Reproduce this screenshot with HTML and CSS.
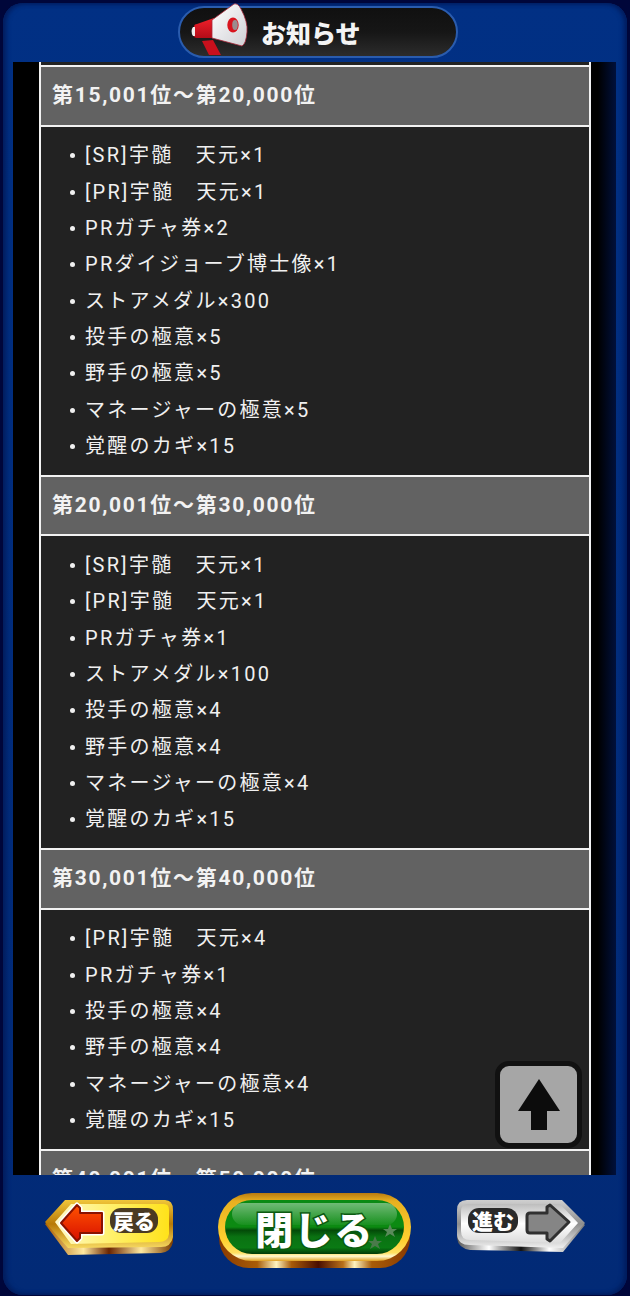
FILE: index.html
```html
<!DOCTYPE html>
<html lang="ja">
<head>
    <meta charset="UTF-8">
    <meta name="viewport" content="width=device-width, initial-scale=1.0">
    <title>お知らせ</title>
    <link rel="stylesheet" href="styles.css">
</head>
<body>
    <div class="frame">
        <!-- Title -->
        <header class="top-bar">
            <div class="title-pill">
                <svg class="megaphone" viewBox="0 0 60 60" width="60" height="60">
                    <defs>
                        <linearGradient id="bellFace" x1="0" y1="0" x2="1" y2="1">
                            <stop offset="0" stop-color="#ffffff"/>
                            <stop offset="1" stop-color="#cfcfd4"/>
                        </linearGradient>
                        <linearGradient id="hornRed" x1="0" y1="0" x2="0" y2="1">
                            <stop offset="0" stop-color="#f0202a"/>
                            <stop offset="1" stop-color="#b40c18"/>
                        </linearGradient>
                    </defs>
                    <path d="M14 41 L25 40 L33 55 L21 55 Z" fill="#c8101c"/>
                    <path d="M6 27 Q6 24 9 24 L26 18 L26 38 L9 38 Q6 38 5 35 Z" fill="url(#hornRed)"/>
                    <path d="M5 27 Q2 31 5 36 L7 36 L7 27 Z" fill="#eeeeee"/>
                    <path d="M24 20 L46 4 Q50 3 53 9 Q60 22 59 32 Q58 44 54 46 L24 38 Z" fill="url(#bellFace)" stroke="#a8283a" stroke-width="0.8"/>
                    <ellipse cx="45" cy="25" rx="5.7" ry="7.5" fill="#d8141e"/>
                    <ellipse cx="47" cy="25" rx="2.8" ry="5" fill="#9a8c8e"/>
                </svg>
                <span class="title-text">お知らせ</span>
            </div>
        </header>

        <!-- Scrolling list -->
        <main class="viewport">
            <div class="board">
                <div class="stub"></div>

                <h2 class="rank-head">第15,001位～第20,000位</h2>
                <ul class="rank-body">
                    <li>[SR]宇髄　天元×1</li>
                    <li>[PR]宇髄　天元×1</li>
                    <li>PRガチャ券×2</li>
                    <li>PRダイジョーブ博士像×1</li>
                    <li>ストアメダル×300</li>
                    <li>投手の極意×5</li>
                    <li>野手の極意×5</li>
                    <li>マネージャーの極意×5</li>
                    <li>覚醒のカギ×15</li>
                </ul>

                <h2 class="rank-head">第20,001位～第30,000位</h2>
                <ul class="rank-body">
                    <li>[SR]宇髄　天元×1</li>
                    <li>[PR]宇髄　天元×1</li>
                    <li>PRガチャ券×1</li>
                    <li>ストアメダル×100</li>
                    <li>投手の極意×4</li>
                    <li>野手の極意×4</li>
                    <li>マネージャーの極意×4</li>
                    <li>覚醒のカギ×15</li>
                </ul>

                <h2 class="rank-head">第30,001位～第40,000位</h2>
                <ul class="rank-body">
                    <li>[PR]宇髄　天元×4</li>
                    <li>PRガチャ券×1</li>
                    <li>投手の極意×4</li>
                    <li>野手の極意×4</li>
                    <li>マネージャーの極意×4</li>
                    <li>覚醒のカギ×15</li>
                </ul>

                <h2 class="rank-head">第40,001位～第50,000位</h2>
            </div>

            <div class="to-top">
                <svg viewBox="0 0 42 51" width="42" height="51">
                    <path d="M21 0 L42 32 L29 32 L29 51 L13 51 L13 32 L0 32 Z" fill="#0c0c0c"/>
                </svg>
            </div>
        </main>

        <!-- Buttons -->
        <footer class="bottom-bar">
            <div class="nav-btn nav-back">
                <svg class="nav-shape" viewBox="0 0 132 58" width="132" height="58">
                    <defs>
                        <linearGradient id="goldFace" x1="0" y1="0" x2="1" y2="0">
                            <stop offset="0" stop-color="#fff9c8"/>
                            <stop offset="0.5" stop-color="#fff06a"/>
                            <stop offset="1" stop-color="#ffe21a"/>
                        </linearGradient>
                        <linearGradient id="goldRim" x1="0" y1="0" x2="0" y2="1">
                            <stop offset="0" stop-color="#f0c63a"/>
                            <stop offset="0.5" stop-color="#b87a06"/>
                            <stop offset="1" stop-color="#f6d860"/>
                        </linearGradient>
                        <linearGradient id="goldLip" x1="0" y1="0" x2="1" y2="0">
                            <stop offset="0" stop-color="#a85c00"/>
                            <stop offset="0.3" stop-color="#ffe9a0"/>
                            <stop offset="0.5" stop-color="#6a2400"/>
                            <stop offset="0.75" stop-color="#ffe9a0"/>
                            <stop offset="1" stop-color="#7a3c00"/>
                        </linearGradient>
                        <linearGradient id="redArrow" x1="0" y1="0" x2="0" y2="1">
                            <stop offset="0" stop-color="#ff5200"/>
                            <stop offset="1" stop-color="#d81000"/>
                        </linearGradient>
                    </defs>
                    <path d="M2 26 L25 8 L124 8 Q130 8 130 18 L130 44 Q128 54 118 55 L25 57 Z" fill="url(#goldLip)"/>
                    <path d="M2 24 L22 2 L122 2 Q130 2 130 12 L130 39 Q128 49 118 49 L25 50 Z" fill="url(#goldRim)"/>
                    <path d="M12 24 L28 6 L121 6 Q126 6 126 12 L126 36 Q125 44 116 44 L28 46 Z" fill="url(#goldFace)"/>
                    <path d="M18 25 L34 7 L37 10 L37 15 L59 15 L59 35 L37 35 L37 40 L34 43 Z" fill="#fff" stroke="#fff" stroke-width="5" stroke-linejoin="round"/>
                    <path d="M18 25 L34 7 L37 10 L37 15 L59 15 L59 35 L37 35 L37 40 L34 43 Z" fill="url(#redArrow)" stroke="#8a1200" stroke-width="2" stroke-linejoin="round"/>
                </svg>
                <span class="nav-label nav-label-back">戻る</span>
            </div>

            <div class="close-btn">
                <svg class="nav-shape" viewBox="0 0 193 76" width="193" height="76">
                    <defs>
                        <linearGradient id="closeLip" x1="0" y1="0" x2="1" y2="0">
                            <stop offset="0" stop-color="#8a3a00"/>
                            <stop offset="0.2" stop-color="#a85c08"/>
                            <stop offset="0.3" stop-color="#fff4c0"/>
                            <stop offset="0.38" stop-color="#a85a08"/>
                            <stop offset="0.52" stop-color="#4a0e00"/>
                            <stop offset="0.65" stop-color="#b8701a"/>
                            <stop offset="0.71" stop-color="#fff4c0"/>
                            <stop offset="0.8" stop-color="#a85c08"/>
                            <stop offset="1" stop-color="#8a3a00"/>
                        </linearGradient>
                        <linearGradient id="closeRim" x1="0" y1="0" x2="0" y2="1">
                            <stop offset="0" stop-color="#b87a10"/>
                            <stop offset="0.12" stop-color="#e8b020"/>
                            <stop offset="0.7" stop-color="#ffd030"/>
                            <stop offset="0.88" stop-color="#ffe060"/>
                            <stop offset="0.93" stop-color="#fff8d0"/>
                            <stop offset="1" stop-color="#e0a020"/>
                        </linearGradient>
                        <linearGradient id="closeGreen" x1="0" y1="0" x2="0" y2="1">
                            <stop offset="0" stop-color="#0a8a14"/>
                            <stop offset="0.5" stop-color="#0c8a12"/>
                            <stop offset="0.56" stop-color="#034a08"/>
                            <stop offset="0.68" stop-color="#0a7212"/>
                            <stop offset="0.88" stop-color="#0a7a14"/>
                            <stop offset="1" stop-color="#023a08"/>
                        </linearGradient>
                        <linearGradient id="closeGloss" x1="0" y1="0" x2="0" y2="1">
                            <stop offset="0" stop-color="#ffffff" stop-opacity="0.42"/>
                            <stop offset="1" stop-color="#ffffff" stop-opacity="0.05"/>
                        </linearGradient>
                    </defs>
                    <rect x="1" y="14" width="191" height="61" rx="30" fill="url(#closeLip)"/>
                    <rect x="0" y="0" width="193" height="68" rx="34" fill="url(#closeRim)"/>
                    <rect x="7" y="7" width="179" height="54" rx="27" fill="url(#closeGreen)"/>
                    <rect x="14" y="10" width="165" height="22" rx="11" fill="url(#closeGloss)"/>
                    <path d="M172 31 L174 36 L179 36 L175 39 L177 44 L172 41 L167 44 L169 39 L165 36 L170 36 Z" fill="#5a8a5a"/>
                    <path d="M157 43 L159 48 L164 48 L160 51 L162 56 L157 53 L152 56 L154 51 L150 48 L155 48 Z" fill="#4a7a4a"/>
                </svg>
                <span class="close-label">閉じる</span>
            </div>

            <div class="nav-btn nav-next">
                <svg class="nav-shape" viewBox="0 0 130 58" width="130" height="58">
                    <defs>
                        <linearGradient id="silverFace" x1="0" y1="0" x2="0" y2="1">
                            <stop offset="0" stop-color="#bdbdbd"/>
                            <stop offset="0.5" stop-color="#ffffff"/>
                            <stop offset="1" stop-color="#dcdcdc"/>
                        </linearGradient>
                        <linearGradient id="silverRim" x1="0" y1="0" x2="0" y2="1">
                            <stop offset="0" stop-color="#d0d0d0"/>
                            <stop offset="0.5" stop-color="#8e8e8e"/>
                            <stop offset="1" stop-color="#efefef"/>
                        </linearGradient>
                        <linearGradient id="silverLip" x1="0" y1="0" x2="1" y2="0">
                            <stop offset="0" stop-color="#555"/>
                            <stop offset="0.25" stop-color="#fff"/>
                            <stop offset="0.5" stop-color="#111"/>
                            <stop offset="0.72" stop-color="#fff"/>
                            <stop offset="1" stop-color="#777"/>
                        </linearGradient>
                    </defs>
                    <path d="M1 16 Q1 8 12 8 L106 8 L129 27 L107 54 L14 52 Q2 50 1 40 Z" fill="url(#silverLip)"/>
                    <path d="M1 12 Q1 2 11 2 L106 2 L129 25 L107 50 L14 47 Q2 47 1 37 Z" fill="url(#silverRim)"/>
                    <path d="M5 13 Q5 6 12 6 L104 6 L122 25 L104 45 L14 42 Q5 42 5 33 Z" fill="url(#silverFace)"/>
                    <path d="M74 15 L91 15 L91 9 L94 7 L113 24 L94 43 L91 41 L91 35 L74 35 Q71 35 71 32 L71 18 Q71 15 74 15 Z" fill="#858585" stroke="#303030" stroke-width="3" stroke-linejoin="round"/>
                </svg>
                <span class="nav-label nav-label-next">進む</span>
            </div>
        </footer>
    </div>
</body>
</html>
```

FILE: styles.css
```css
/* General Styles */
html, body {
    margin: 0;
    padding: 0;
}

body {
    width: 630px;
    height: 1296px;
    overflow: hidden;
    background-color: #00063a;
    color: white;
    font-family: Roboto, "Noto Sans CJK JP", sans-serif;
}

/* Outer Frame */
.frame {
    display: flex;
    flex-direction: column;
    height: 1292px;
    margin: 3px 3px 1px;
    background: linear-gradient(#013084, #022a76);
    border-radius: 20px;
    box-shadow: inset 3px 0 5px #021c5c, inset -3px 0 5px #021c5c;
}

/* Title */
.top-bar {
    display: flex;
    justify-content: center;
    height: 59px;
    flex: none;
}

.title-pill {
    position: relative;
    box-sizing: border-box;
    width: 280px;
    height: 52px;
    margin: 3px 0 0 6px;
    padding-left: 81px;
    background: linear-gradient(#101010 0%, #161616 50%, #2c2c2c 100%);
    border: 2px solid #2a5cae;
    border-radius: 26px;
    display: flex;
    align-items: center;
}

.megaphone {
    position: absolute;
    left: 8px;
    top: -8px;
}

.title-text {
    font-family: "Noto Sans CJK JP", sans-serif;
    font-size: 25px;
    font-weight: 900;
    color: #f4f4f4;
}

/* Scrolling list */
.viewport {
    position: relative;
    flex: none;
    box-sizing: border-box;
    width: 603px;
    height: 1113px;
    margin-left: 10px;
    overflow: hidden;
    background: linear-gradient(90deg, #000 97%, #00103c 100%);
}

.board {
    box-sizing: border-box;
    width: 552px;
    margin-left: 26px;
    border-left: 2px solid #f2f2f2;
    border-right: 2px solid #f2f2f2;
}

.stub {
    height: 3.4px;
    background-color: #222;
}

.rank-head {
    box-sizing: border-box;
    height: 61.4px;
    margin: 0;
    padding-left: 11px;
    background-color: #626262;
    border-top: 2px solid #f2f2f2;
    border-bottom: 2px solid #f2f2f2;
    font-size: 21px;
    font-weight: 700;
    line-height: 57px;
    letter-spacing: 1.7px;
    color: #f2f2f2;
}

.rank-body {
    margin: 0;
    padding: 10.6px 0 10.7px 25px;
    list-style: none;
    background-color: #222;
}

.rank-body li {
    position: relative;
    padding-left: 19px;
    height: 36.33px;
    line-height: 36.33px;
    font-size: 20px;
    letter-spacing: 2.28px;
    color: #f0f0f0;
    white-space: nowrap;
}

.rank-body li::before {
    content: "";
    position: absolute;
    left: 4px;
    top: 16px;
    width: 5px;
    height: 5px;
    border-radius: 50%;
    background-color: #f0f0f0;
}

/* Back To Top */
.to-top {
    position: absolute;
    left: 482px;
    top: 999px;
    width: 77px;
    height: 77px;
    background-color: #a6a6a6;
    border: 5px solid #111;
    border-radius: 14px;
    display: flex;
    align-items: center;
    justify-content: center;
}

/* Buttons */
.bottom-bar {
    flex: 1;
    display: flex;
    align-items: flex-start;
    gap: 44px;
    padding: 18px 0 0 40px;
}

.nav-btn {
    position: relative;
    width: 132px;
    height: 58px;
    margin-top: 5px;
}

.nav-shape {
    display: block;
}

.nav-label {
    position: absolute;
    top: 10px;
    height: 25px;
    border-radius: 11px;
    font-family: "Noto Sans CJK JP", sans-serif;
    font-size: 21px;
    font-weight: 900;
    line-height: 25px;
    text-align: center;
    color: #fff;
}

.nav-label-back {
    left: 67px;
    width: 48px;
    background-color: #4a3a22;
}

.nav-label-next {
    left: 12px;
    width: 50px;
    background-color: #2a2a2a;
}

.close-btn {
    position: relative;
    width: 193px;
    height: 76px;
    margin-left: -1px;
    margin-right: 1px;
}

.close-label {
    position: absolute;
    left: 0;
    right: 0;
    top: 12px;
    font-family: "Noto Sans CJK JP", sans-serif;
    font-size: 38px;
    font-weight: 900;
    line-height: 46px;
    letter-spacing: 1.5px;
    text-align: center;
    color: #fff;
    paint-order: stroke fill;
    -webkit-text-stroke: 3px #0b5a10;
}
```
